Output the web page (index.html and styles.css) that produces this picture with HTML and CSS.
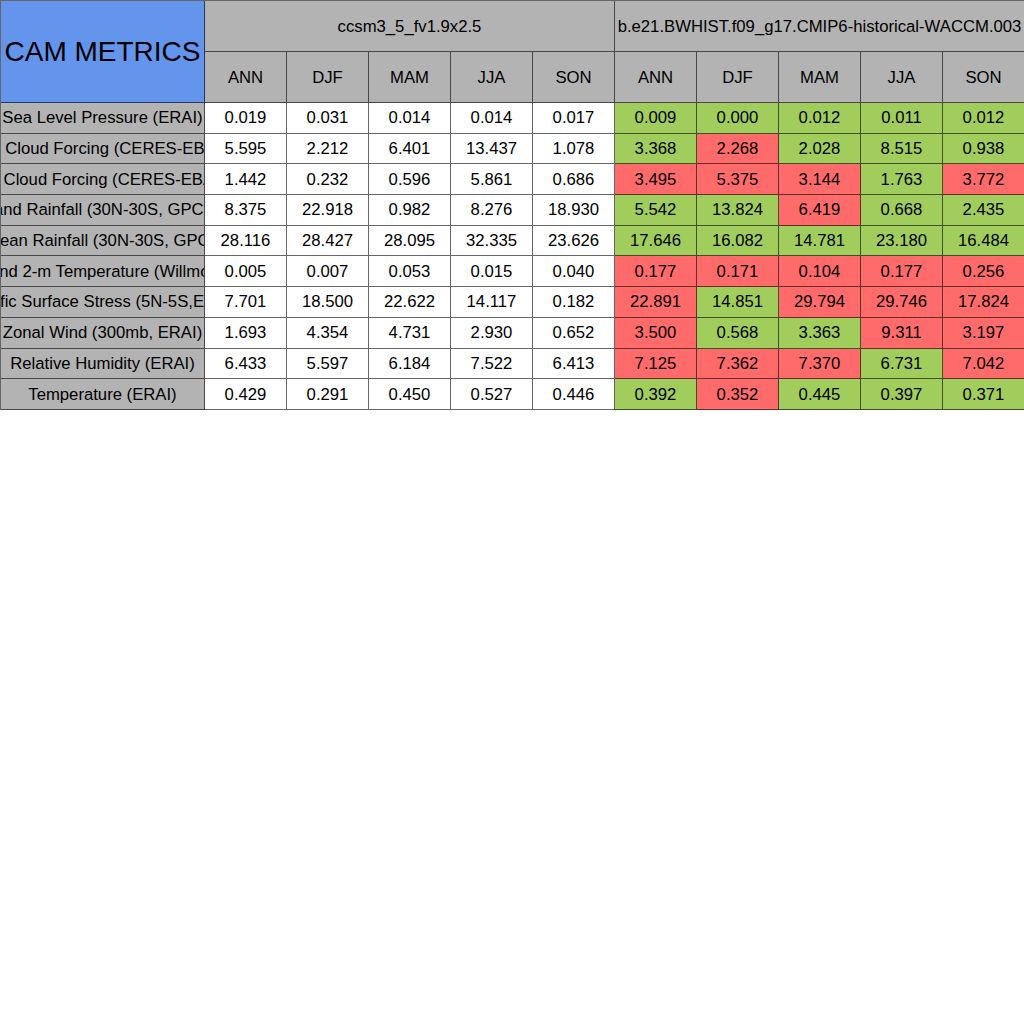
FILE: index.html
```html
<!DOCTYPE html>
<html>
<head>
<meta charset="utf-8">
<link rel="stylesheet" href="styles.css">
</head>
<body>
<div class="metrics">
  <div class="cell title"><span>CAM METRICS</span></div>
  <div class="cell hd group"><span>ccsm3_5_fv1.9x2.5</span></div>
  <div class="cell hd group"><span>b.e21.BWHIST.f09_g17.CMIP6-historical-WACCM.003</span></div>

  <div class="cell hd"><span>ANN</span></div>
  <div class="cell hd"><span>DJF</span></div>
  <div class="cell hd"><span>MAM</span></div>
  <div class="cell hd"><span>JJA</span></div>
  <div class="cell hd"><span>SON</span></div>
  <div class="cell hd"><span>ANN</span></div>
  <div class="cell hd"><span>DJF</span></div>
  <div class="cell hd"><span>MAM</span></div>
  <div class="cell hd"><span>JJA</span></div>
  <div class="cell hd"><span>SON</span></div>

  <div class="cell label"><span>Sea Level Pressure (ERAI)</span></div>
  <div class="cell"><span>0.019</span></div>
  <div class="cell"><span>0.031</span></div>
  <div class="cell"><span>0.014</span></div>
  <div class="cell"><span>0.014</span></div>
  <div class="cell"><span>0.017</span></div>
  <div class="cell g"><span>0.009</span></div>
  <div class="cell g"><span>0.000</span></div>
  <div class="cell g"><span>0.012</span></div>
  <div class="cell g"><span>0.011</span></div>
  <div class="cell g"><span>0.012</span></div>

  <div class="cell label"><span>SW Cloud Forcing (CERES-EBAF)</span></div>
  <div class="cell"><span>5.595</span></div>
  <div class="cell"><span>2.212</span></div>
  <div class="cell"><span>6.401</span></div>
  <div class="cell"><span>13.437</span></div>
  <div class="cell"><span>1.078</span></div>
  <div class="cell g"><span>3.368</span></div>
  <div class="cell r"><span>2.268</span></div>
  <div class="cell g"><span>2.028</span></div>
  <div class="cell g"><span>8.515</span></div>
  <div class="cell g"><span>0.938</span></div>

  <div class="cell label"><span>LW Cloud Forcing (CERES-EBAF)</span></div>
  <div class="cell"><span>1.442</span></div>
  <div class="cell"><span>0.232</span></div>
  <div class="cell"><span>0.596</span></div>
  <div class="cell"><span>5.861</span></div>
  <div class="cell"><span>0.686</span></div>
  <div class="cell r"><span>3.495</span></div>
  <div class="cell r"><span>5.375</span></div>
  <div class="cell r"><span>3.144</span></div>
  <div class="cell g"><span>1.763</span></div>
  <div class="cell r"><span>3.772</span></div>

  <div class="cell label"><span>Land Rainfall (30N-30S, GPCP)</span></div>
  <div class="cell"><span>8.375</span></div>
  <div class="cell"><span>22.918</span></div>
  <div class="cell"><span>0.982</span></div>
  <div class="cell"><span>8.276</span></div>
  <div class="cell"><span>18.930</span></div>
  <div class="cell g"><span>5.542</span></div>
  <div class="cell g"><span>13.824</span></div>
  <div class="cell r"><span>6.419</span></div>
  <div class="cell g"><span>0.668</span></div>
  <div class="cell g"><span>2.435</span></div>

  <div class="cell label"><span>Ocean Rainfall (30N-30S, GPCP)</span></div>
  <div class="cell"><span>28.116</span></div>
  <div class="cell"><span>28.427</span></div>
  <div class="cell"><span>28.095</span></div>
  <div class="cell"><span>32.335</span></div>
  <div class="cell"><span>23.626</span></div>
  <div class="cell g"><span>17.646</span></div>
  <div class="cell g"><span>16.082</span></div>
  <div class="cell g"><span>14.781</span></div>
  <div class="cell g"><span>23.180</span></div>
  <div class="cell g"><span>16.484</span></div>

  <div class="cell label"><span>Land 2-m Temperature (Willmott)</span></div>
  <div class="cell"><span>0.005</span></div>
  <div class="cell"><span>0.007</span></div>
  <div class="cell"><span>0.053</span></div>
  <div class="cell"><span>0.015</span></div>
  <div class="cell"><span>0.040</span></div>
  <div class="cell r"><span>0.177</span></div>
  <div class="cell r"><span>0.171</span></div>
  <div class="cell r"><span>0.104</span></div>
  <div class="cell r"><span>0.177</span></div>
  <div class="cell r"><span>0.256</span></div>

  <div class="cell label"><span>Pacific Surface Stress (5N-5S,ERAI)</span></div>
  <div class="cell"><span>7.701</span></div>
  <div class="cell"><span>18.500</span></div>
  <div class="cell"><span>22.622</span></div>
  <div class="cell"><span>14.117</span></div>
  <div class="cell"><span>0.182</span></div>
  <div class="cell r"><span>22.891</span></div>
  <div class="cell g"><span>14.851</span></div>
  <div class="cell r"><span>29.794</span></div>
  <div class="cell r"><span>29.746</span></div>
  <div class="cell r"><span>17.824</span></div>

  <div class="cell label"><span>Zonal Wind (300mb, ERAI)</span></div>
  <div class="cell"><span>1.693</span></div>
  <div class="cell"><span>4.354</span></div>
  <div class="cell"><span>4.731</span></div>
  <div class="cell"><span>2.930</span></div>
  <div class="cell"><span>0.652</span></div>
  <div class="cell r"><span>3.500</span></div>
  <div class="cell g"><span>0.568</span></div>
  <div class="cell g"><span>3.363</span></div>
  <div class="cell r"><span>9.311</span></div>
  <div class="cell r"><span>3.197</span></div>

  <div class="cell label"><span>Relative Humidity (ERAI)</span></div>
  <div class="cell"><span>6.433</span></div>
  <div class="cell"><span>5.597</span></div>
  <div class="cell"><span>6.184</span></div>
  <div class="cell"><span>7.522</span></div>
  <div class="cell"><span>6.413</span></div>
  <div class="cell r"><span>7.125</span></div>
  <div class="cell r"><span>7.362</span></div>
  <div class="cell r"><span>7.370</span></div>
  <div class="cell g"><span>6.731</span></div>
  <div class="cell r"><span>7.042</span></div>

  <div class="cell label"><span>Temperature (ERAI)</span></div>
  <div class="cell"><span>0.429</span></div>
  <div class="cell"><span>0.291</span></div>
  <div class="cell"><span>0.450</span></div>
  <div class="cell"><span>0.527</span></div>
  <div class="cell"><span>0.446</span></div>
  <div class="cell g"><span>0.392</span></div>
  <div class="cell r"><span>0.352</span></div>
  <div class="cell g"><span>0.445</span></div>
  <div class="cell g"><span>0.397</span></div>
  <div class="cell g"><span>0.371</span></div>
</div>
</body>
</html>
```
FILE: styles.css
```css
html, body {
  margin: 0;
  padding: 0;
  background: #ffffff;
}

body {
  font-family: "Liberation Sans", Arial, sans-serif;
  font-size: 16.7px;
  color: #000;
}

.metrics {
  display: grid;
  grid-template-columns: 204px repeat(10, 82px);
  grid-template-rows: 51px 51px repeat(10, 30.7px);
  width: 1024px;
  box-sizing: border-box;
  border-top: 1px solid rgba(0, 0, 0, 0.6);
  border-left: 1px solid rgba(0, 0, 0, 0.6);
}

.cell {
  box-sizing: border-box;
  display: flex;
  align-items: center;
  justify-content: center;
  overflow: hidden;
  white-space: nowrap;
  padding-top: 1px;
  border-right: 1px solid rgba(0, 0, 0, 0.6);
  border-bottom: 1px solid rgba(0, 0, 0, 0.6);
  background: #ffffff;
}

.cell span {
  flex: none;
}

.title {
  grid-row: 1 / span 2;
  background: #6495ed;
  font-size: 28px;
}

.hd {
  background: #b3b3b3;
}

.group {
  grid-column: span 5;
}

.label {
  background: #b3b3b3;
}

.g {
  background: #a1cd5c;
}

.r {
  background: #ff6b6b;
}
```
